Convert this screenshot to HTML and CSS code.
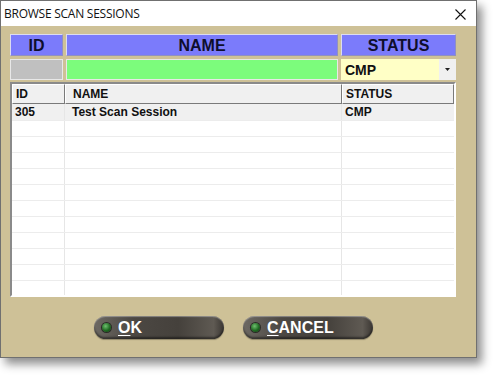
FILE: index.html
```html
<!DOCTYPE html>
<html>
<head>
<meta charset="utf-8">
<link rel="stylesheet" href="styles.css">
</head>
<body>
<div class="window">
  <div class="titlebar">
    <span class="title">BROWSE SCAN SESSIONS</span>
    <svg class="close" width="11" height="11" viewBox="0 0 11 11"><path d="M0.5 0.5 L10.5 10.5 M10.5 0.5 L0.5 10.5" stroke="#111" stroke-width="1.1" fill="none"/></svg>
  </div>
  <div class="body">
    <div class="filters">
      <div class="hcell">ID</div>
      <div class="hcell">NAME</div>
      <div class="hcell">STATUS</div>
      <div class="fcell f-id"></div>
      <div class="fcell f-name"></div>
      <div class="fcell f-status"><span class="combo-text">CMP</span><span class="combo-btn"><svg width="5" height="3" viewBox="0 0 5 3"><path d="M0 0 H5 L2.5 3 Z" fill="#222"/></svg></span></div>
    </div>
    <div class="grid">
      <div class="grow ghead"><div class="c c1">ID</div><div class="c c2">NAME</div><div class="c c3">STATUS</div></div>
      <div class="grow sel"><div class="c c1">305</div><div class="c c2">Test Scan Session</div><div class="c c3">CMP</div></div>
      <div class="grow"><div class="c c1"></div><div class="c c2"></div><div class="c c3"></div></div>
      <div class="grow"><div class="c c1"></div><div class="c c2"></div><div class="c c3"></div></div>
      <div class="grow"><div class="c c1"></div><div class="c c2"></div><div class="c c3"></div></div>
      <div class="grow"><div class="c c1"></div><div class="c c2"></div><div class="c c3"></div></div>
      <div class="grow"><div class="c c1"></div><div class="c c2"></div><div class="c c3"></div></div>
      <div class="grow"><div class="c c1"></div><div class="c c2"></div><div class="c c3"></div></div>
      <div class="grow"><div class="c c1"></div><div class="c c2"></div><div class="c c3"></div></div>
      <div class="grow"><div class="c c1"></div><div class="c c2"></div><div class="c c3"></div></div>
      <div class="grow"><div class="c c1"></div><div class="c c2"></div><div class="c c3"></div></div>
      <div class="grow"><div class="c c1"></div><div class="c c2"></div><div class="c c3"></div></div>
      <div class="grow last"><div class="c c1"></div><div class="c c2"></div><div class="c c3"></div></div>
    </div>
    <div class="buttons">
      <div class="btn"><span class="led"></span><span class="label"><u>O</u>K</span></div>
      <div class="btn"><span class="led"></span><span class="label"><u>C</u>ANCEL</span></div>
    </div>
  </div>
</div>
</body>
</html>
```
FILE: styles.css
```css
html, body {
  margin: 0;
  padding: 0;
  background: #ffffff;
}
body {
  width: 493px;
  height: 375px;
  overflow: hidden;
  font-family: "Liberation Sans", Arial, sans-serif;
}
.window {
  width: 475px;
  height: 356px;
  border: 1px solid #707070;
  background: #cec197;
  box-shadow: 5px 6px 9px rgba(0,0,0,0.45);
  display: flex;
  flex-direction: column;
}
.titlebar {
  height: 25px;
  background: #ffffff;
  display: flex;
  align-items: center;
  justify-content: space-between;
  padding: 0 10px 0 3px;
}
.title {
  font-family: "Open Sans", "Noto Sans", sans-serif;
  font-size: 12px;
  color: #111;
  letter-spacing: -0.25px;
}
.close {
  margin-top: 2px;
}
.body {
  flex: 1;
  padding: 8px 0 0 9px;
  display: flex;
  flex-direction: column;
}
.filters {
  display: grid;
  grid-template-columns: 53px 272px 115px;
  grid-template-rows: 22px 21px;
  column-gap: 3px;
  row-gap: 3px;
  width: 446px;
}
.hcell {
  background: #7b7bfb;
  border: 1px solid #dcdcf0;
  border-right-color: #9090c0;
  border-bottom-color: #9090c0;
  font-weight: bold;
  font-size: 16px;
  color: #0e0e2c;
  display: flex;
  align-items: center;
  justify-content: center;
  box-sizing: border-box;
  padding-top: 1px;
}
.fcell {
  box-sizing: border-box;
  border: 1px solid #e8e8e8;
}
.f-id { background: #c0c0c0; }
.f-name { background: #7cfc7c; }
.f-status {
  background: #ffffc6;
  display: flex;
  align-items: center;
  border: none;
}
.combo-text {
  flex: 1;
  font-weight: bold;
  font-size: 14px;
  color: #111;
  padding-left: 4px;
}
.combo-btn {
  width: 17px;
  align-self: stretch;
  background: #f0f0f0;
  display: flex;
  align-items: center;
  justify-content: center;
}
.grid {
  margin-top: 2px;
  width: 446px;
  box-sizing: border-box;
  border: 2px solid;
  border-color: #8a8a8a #ffffff #ffffff #8a8a8a;
  background: #ffffff;
  height: 215px;
  overflow: hidden;
}
.grow {
  display: flex;
  height: 16px;
  border-bottom: 1px solid #ececec;
  box-sizing: border-box;
}
.grow.last { border-bottom: none; }
.c {
  font-size: 12px;
  font-weight: bold;
  color: #111;
  box-sizing: border-box;
  line-height: 15px;
  padding-left: 3px;
  border-right: 1px solid #e6e6e6;
}
.c1 { width: 53px; }
.c2 { width: 277px; padding-left: 7px; }
.c3 { width: 112px; border-right: none; }
.ghead {
  height: 20px;
  border-bottom: none;
}
.ghead .c {
  background: #f0f0f0;
  line-height: 18px;
  border: 1px solid;
  border-color: #ffffff #7a7a7a #7a7a7a #ffffff;
}
.grow.sel { background: #f0f0f0; height: 17px; }
.grow.sel .c { line-height: 17px; }
.buttons {
  display: flex;
  gap: 19px;
  margin-top: 19px;
  padding-left: 84px;
}
.btn {
  width: 130px;
  height: 23px;
  border-radius: 12px;
  background: linear-gradient(to right, #6d6963 0%, #4c4843 30%, #45413c 65%, #5f5a53 92%, #3a3632 100%);
  box-shadow: inset 0 1px 1px rgba(255,255,255,0.35), inset 0 -2px 2px rgba(0,0,0,0.45), 0 1px 1px rgba(0,0,0,0.3);
  display: flex;
  align-items: center;
  box-sizing: border-box;
  padding-left: 8px;
}
.led {
  width: 9px;
  height: 9px;
  border-radius: 50%;
  background: radial-gradient(circle at 40% 35%, #6fc06f 0%, #1f6a22 55%, #0d3a10 100%);
  box-shadow: 0 0 0 1px #2a2a26;
  margin-right: 7px;
}
.label {
  color: #ffffff;
  font-weight: bold;
  font-size: 16px;
}
.label u {
  text-decoration-thickness: 1px;
  text-underline-offset: 2px;
}
```
